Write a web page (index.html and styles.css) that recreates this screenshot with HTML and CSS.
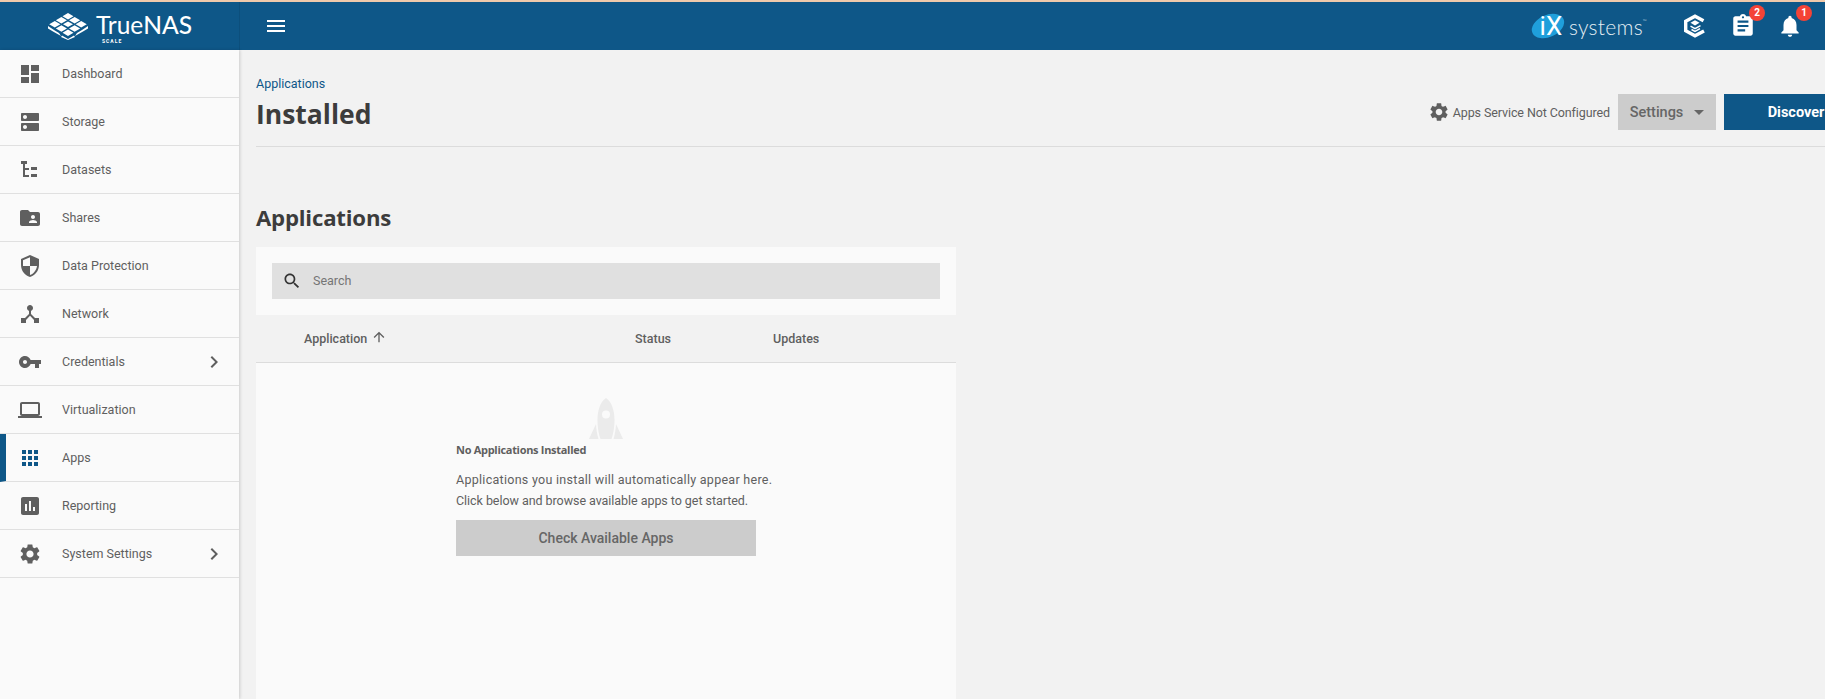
FILE: index.html
```html
<!DOCTYPE html>
<html lang="en">
<head>
<meta charset="utf-8">
<title>TrueNAS - Applications</title>
<link rel="stylesheet" href="styles.css">
</head>
<body>
<div class="app">
  <header class="topbar">
    <div class="brand">
      <svg class="brand-mark" viewBox="0 0 40 27" fill="#fff">
        <polygon points="20,0 25.500,3.300 20,6.600 14.500,3.300"/>
        <polygon points="13.400,4 19,7.300 13.400,10.600 7.800,7.300"/><polygon points="26.600,4 32.200,7.300 26.600,10.600 21,7.300"/>
        <polygon points="6.800,8 12.400,11.300 6.800,14.600 1.200,11.300"/><polygon points="33.200,8 38.800,11.300 33.200,14.600 27.600,11.300"/>
        <polygon points="20,8.500 25,11.300 20,14 15,11.300"/>
        <polygon points="13.400,12.300 19,15.500 13.400,18.800 7.800,15.500"/><polygon points="26.600,12.300 32.200,15.500 26.600,18.800 21,15.500"/>
        <polygon points="20,16.500 25.500,19.700 20,23 14.500,19.700"/>
        <polygon points="0,13 6,17 11,20 13,23 5,18.500 0,15.500"/><polygon points="40,13 34,17 29,20 27,23 35,18.500 40,15.500"/>
        <polygon points="14,22.500 20,26 26,22.500 27,24 20,27 13,24"/>
      </svg>
      <div class="brand-text">
        <span class="brand-name"><span class="brand-true">True</span><b>NAS</b></span>
        <span class="brand-scale">SCALE</span>
      </div>
    </div>
    <button class="menu-btn" aria-label="Toggle menu">
      <svg class="icon24" viewBox="0 0 24 24"><path d="M3 18h18v-2H3v2zm0-5h18v-2H3v2zm0-7v2h18V6H3z"/></svg>
    </button>
    <div class="top-actions">
      <div class="ix">
        <span class="ix-badge"><span class="ix-oval"></span><span class="ix-letters">iX</span></span>
        <span class="ix-word">systems<sup>™</sup></span>
      </div>
      <svg class="tc-icon" viewBox="0 0 24 24" fill="none" stroke="#fff" stroke-width="3.400" stroke-linejoin="miter">
        <path d="M20.500 6.800 12 2.200 2.700 7.200V16.800L12 21.800 21 17"/>
        <path d="M7.500 12.200 12 14.700 17.500 11.700M8.500 15.500 12 17.400 17 14.700" stroke-width="1.500"/>
        <polygon points="12,6.300 16.500,8.800 12,11.500 7.500,8.800" fill="#fff" stroke="none"/>
      </svg>
      <div class="icon-badge">
        <svg class="icon26" viewBox="0 0 24 24" fill="#fff"><path d="M19 3h-4.180C14.400 1.840 13.300 1 12 1c-1.300 0-2.400.84-2.820 2H5c-1.100 0-2 .9-2 2v14c0 1.100.9 2 2 2h14c1.100 0 2-.9 2-2V5c0-1.100-.9-2-2-2zm-7 0c.55 0 1 .45 1 1s-.45 1-1 1-1-.45-1-1 .45-1 1-1zm2 14H7v-2h7v2zm3-4H7v-2h10v2zm0-4H7V7h10v2z"/></svg>
        <span class="badge">2</span>
      </div>
      <div class="icon-badge">
        <svg class="icon26" viewBox="0 0 24 24" fill="#fff"><path d="M12 22c1.100 0 2-.9 2-2h-4c0 1.100.89 2 2 2zm6-6v-5c0-3.070-1.640-5.640-4.500-6.320V4c0-.83-.67-1.500-1.500-1.500s-1.500.67-1.500 1.500v.68C7.630 5.360 6 7.920 6 11v5l-2 2v1h16v-1l-2-2z"/></svg>
        <span class="badge">1</span>
      </div>
    </div>
  </header>

  <div class="shell">
    <nav class="sidenav">
      <a class="nav-row"><svg class="icon24" viewBox="0 0 24 24"><path d="M3 13h8V3H3v10zm0 8h8v-6H3v6zm10 0h8V11h-8v10zm0-18v6h8V3h-8z"/></svg><span>Dashboard</span></a>
      <a class="nav-row"><svg class="icon24" viewBox="0 0 24 24"><path d="M20 13H4c-.55 0-1 .45-1 1v6c0 .55.45 1 1 1h16c.55 0 1-.45 1-1v-6c0-.55-.45-1-1-1zM7 19c-1.100 0-2-.9-2-2s.9-2 2-2 2 .9 2 2-.9 2-2 2zM20 3H4c-.55 0-1 .45-1 1v6c0 .55.45 1 1 1h16c.55 0 1-.45 1-1V4c0-.55-.45-1-1-1zM7 9c-1.100 0-2-.9-2-2s.9-2 2-2 2 .9 2 2-.9 2-2 2z"/></svg><span>Storage</span></a>
      <a class="nav-row"><svg class="icon24" viewBox="0 0 24 24"><path d="M3 3h6v3H3zM5 6h2v4h4v2H7v5h4v2H5zM13 9h6v3h-6zM13 16h6v3h-6z"/></svg><span>Datasets</span></a>
      <a class="nav-row"><svg class="icon24" viewBox="0 0 24 24"><path d="M20 6h-8l-2-2H4c-1.100 0-1.990.9-1.990 2L2 18c0 1.100.9 2 2 2h16c1.100 0 2-.9 2-2V8c0-1.100-.9-2-2-2zm-5 3c1.100 0 2 .9 2 2s-.9 2-2 2-2-.9-2-2 .9-2 2-2zm4 8h-8v-1c0-1.330 2.670-2 4-2s4 .67 4 2v1z"/></svg><span>Shares</span></a>
      <a class="nav-row"><svg class="icon24" viewBox="0 0 24 24"><path d="M12 1L3 5v6c0 5.550 3.840 10.740 9 12 5.160-1.260 9-6.450 9-12V5l-9-4zm0 10.990h7c-.53 4.120-3.280 7.790-7 8.940V12H5V6.300l7-3.110v8.800z"/></svg><span>Data Protection</span></a>
      <a class="nav-row"><svg class="icon24" viewBox="0 0 24 24"><path d="M17 16l-4-4V8.820C14.160 8.400 15 7.300 15 6c0-1.660-1.340-3-3-3S9 4.340 9 6c0 1.300.84 2.400 2 2.820V12l-4 4H3v5h5v-3.050l4-4.200 4 4.200V21h5v-5h-4z"/></svg><span>Network</span></a>
      <a class="nav-row"><svg class="icon24" viewBox="0 0 24 24"><path d="M12.650 10C11.830 7.670 9.610 6 7 6c-3.310 0-6 2.690-6 6s2.690 6 6 6c2.610 0 4.830-1.670 5.650-4H17v4h4v-4h2v-4H12.650zM7 14c-1.100 0-2-.9-2-2s.9-2 2-2 2 .9 2 2-.9 2-2 2z"/></svg><span>Credentials</span><svg class="icon24 chev" viewBox="0 0 24 24"><path d="M10 6L8.590 7.410 13.170 12l-4.580 4.590L10 18l6-6z"/></svg></a>
      <a class="nav-row"><svg class="icon24" viewBox="0 0 24 24"><path d="M20 18c1.100 0 1.990-.9 1.990-2L22 6c0-1.100-.9-2-2-2H4c-1.100 0-2 .9-2 2v10c0 1.100.9 2 2 2H0v2h24v-2h-4zM4 6h16v10H4V6z"/></svg><span>Virtualization</span></a>
      <a class="nav-row active"><svg class="icon24" viewBox="0 0 24 24"><path d="M4 8h4V4H4v4zm6 12h4v-4h-4v4zm-6 0h4v-4H4v4zm0-6h4v-4H4v4zm6 0h4v-4h-4v4zm6-10v4h4V4h-4zm-6 4h4V4h-4v4zm6 6h4v-4h-4v4zm0 6h4v-4h-4v4z"/></svg><span>Apps</span></a>
      <a class="nav-row"><svg class="icon24" viewBox="0 0 24 24"><path d="M19 3H5c-1.100 0-2 .9-2 2v14c0 1.100.9 2 2 2h14c1.100 0 2-.9 2-2V5c0-1.100-.9-2-2-2zM9 17H7v-7h2v7zm4 0h-2V7h2v10zm4 0h-2v-4h2v4z"/></svg><span>Reporting</span></a>
      <a class="nav-row"><svg class="icon24" viewBox="0 0 24 24"><path d="M19.140 12.940c.04-.3.06-.61.06-.94 0-.32-.02-.64-.07-.94l2.030-1.580c.18-.14.23-.41.12-.61l-1.920-3.320c-.12-.22-.37-.29-.59-.22l-2.390.96c-.5-.38-1.030-.7-1.620-.94l-.36-2.540c-.04-.24-.24-.41-.48-.41h-3.840c-.24 0-.43.17-.47.41l-.36 2.540c-.59.24-1.130.57-1.620.94l-2.390-.96c-.22-.08-.47 0-.59.22L2.740 8.870c-.12.21-.08.47.12.61l2.030 1.580c-.05.3-.09.63-.09.94s.02.64.07.94l-2.030 1.580c-.18.14-.23.41-.12.61l1.920 3.320c.12.22.37.29.59.22l2.390-.96c.5.38 1.030.7 1.620.94l.36 2.540c.05.24.24.41.48.41h3.840c.24 0 .44-.17.47-.41l.36-2.540c.59-.24 1.130-.56 1.620-.94l2.390.96c.22.08.47 0 .59-.22l1.920-3.320c.12-.22.07-.47-.12-.61l-2.010-1.580zM12 15.600c-1.980 0-3.600-1.620-3.600-3.600s1.620-3.600 3.600-3.600 3.600 1.620 3.600 3.600-1.620 3.600-3.600 3.600z"/></svg><span>System Settings</span><svg class="icon24 chev" viewBox="0 0 24 24"><path d="M10 6L8.590 7.410 13.170 12l-4.580 4.590L10 18l6-6z"/></svg></a>
    </nav>

    <main class="content">
      <div class="page-head">
        <div class="titles">
          <a class="crumb">Applications</a>
          <h1>Installed</h1>
        </div>
        <div class="head-actions">
          <div class="service">
            <svg class="icon22" viewBox="0 0 24 24"><path d="M19.140 12.940c.04-.3.06-.61.06-.94 0-.32-.02-.64-.07-.94l2.030-1.580c.18-.14.23-.41.12-.61l-1.920-3.320c-.12-.22-.37-.29-.59-.22l-2.390.96c-.5-.38-1.030-.7-1.620-.94l-.36-2.540c-.04-.24-.24-.41-.48-.41h-3.840c-.24 0-.43.17-.47.41l-.36 2.540c-.59.24-1.130.57-1.620.94l-2.390-.96c-.22-.08-.47 0-.59.22L2.740 8.870c-.12.21-.08.47.12.61l2.030 1.580c-.05.3-.09.63-.09.94s.02.64.07.94l-2.030 1.580c-.18.14-.23.41-.12.61l1.920 3.320c.12.22.37.29.59.22l2.390-.96c.5.38 1.030.7 1.620.94l.36 2.540c.05.24.24.41.48.41h3.840c.24 0 .44-.17.47-.41l.36-2.540c.59-.24 1.130-.56 1.620-.94l2.390.96c.22.08.47 0 .59-.22l1.920-3.320c.12-.22.07-.47-.12-.61l-2.010-1.580zM12 15.600c-1.980 0-3.600-1.620-3.600-3.600s1.620-3.600 3.600-3.600 3.600 1.620 3.600 3.600-1.620 3.600-3.600 3.600z"/></svg>
            <span>Apps Service Not Configured</span>
          </div>
          <button class="btn btn-grey">Settings<span class="caret"></span></button>
          <button class="btn btn-blue">Discover</button>
        </div>
      </div>

      <h2>Applications</h2>

      <section class="card">
        <div class="search-wrap">
          <div class="search">
            <svg class="icon20 dark" viewBox="0 0 24 24"><path d="M15.500 14h-.79l-.28-.27C15.410 12.590 16 11.110 16 9.500 16 5.910 13.090 3 9.500 3S3 5.910 3 9.500 5.910 16 9.500 16c1.610 0 3.090-.59 4.230-1.570l.27.28v.79l5 4.990L20.490 19l-4.990-5zm-6 0C7.010 14 5 11.990 5 9.500S7.010 5 9.500 5 14 7.010 14 9.500 11.990 14 9.500 14z"/></svg>
            <span class="placeholder">Search</span>
          </div>
        </div>
        <div class="table-head">
          <div class="th th-app">Application
            <svg class="sort" viewBox="0 0 24 24"><path d="M4 12l1.410 1.410L11 7.830V20h2V7.830l5.580 5.590L20 12l-8-8-8 8z"/></svg>
          </div>
          <div class="th th-status">Status</div>
          <div class="th">Updates</div>
        </div>
        <div class="empty">
          <div class="empty-inner">
            <svg class="rocket" viewBox="0 0 34 42">
              <path fill-rule="evenodd" d="M17 0C23 4 25.500 13 25.500 22C25.500 30 24 37 22.500 41H11.500C10 37 8.500 30 8.500 22C8.500 13 11 4 17 0ZM17 12.500A4 4 0 1 0 17 20.500A4 4 0 1 0 17 12.500Z"/>
              <path d="M7 26 0 41H9.500C8 36 7.200 31 7 26ZM27 26 34 41H24.500C26 36 26.800 31 27 26Z"/>
            </svg>
            <h3>No Applications Installed</h3>
            <p>Applications you install will automatically appear here.</p>
            <p class="tight">Click below and browse available apps to get started.</p>
            <button class="btn btn-grey btn-wide">Check Available Apps</button>
          </div>
        </div>
      </section>
    </main>
  </div>
</div>
</body>
</html>
```

FILE: styles.css
```css
* { box-sizing: border-box; }
html, body { margin: 0; height: 100%; overflow: hidden; }
body { font-family: "Roboto", "Open Sans", sans-serif; color: #5f5f5f; background: #f2f2f2; }
.app { height: 100vh; display: flex; flex-direction: column; border-top: 2px solid #efc9ab; }
.icon24 { width: 24px; height: 24px; flex: none; fill: #5f5f5f; display: block; }
.icon26 { width: 26px; height: 26px; display: block; }
.icon22 { width: 22px; height: 22px; flex: none; fill: #5f5f5f; display: block; }
.icon20 { width: 20px; height: 20px; flex: none; fill: #5f5f5f; display: block; }
.icon20.dark { fill: #333; }

.topbar { height: 48px; flex: none; background: #0e5788; display: flex; align-items: center; color: #fff; }
.brand { width: 240px; height: 100%; flex: none; display: flex; align-items: center; padding-left: 48px; gap: 8px; border-right: 1px solid #0c4f7c; }
.brand-mark { width: 40px; height: 27px; flex: none; }
.brand-text { display: flex; flex-direction: column; align-items: flex-start; height: 40px; position: relative; }
.brand-name { font-family: "Lato", sans-serif; font-size: 24.500px; line-height: 37px; }
.brand-true { font-weight: 400; }
.brand-name b { font-weight: 500; }
.brand-scale { position: absolute; left: 6px; top: 32px; font-size: 5px; line-height: 6px; font-weight: 700; letter-spacing: 1px; }
.menu-btn { margin-left: 24px; padding: 0; border: 0; background: none; }
.menu-btn .icon24 { fill: #fff; }
.top-actions { margin-left: auto; display: flex; align-items: center; padding-right: 22px; }
.ix { display: flex; align-items: center; margin-right: 36px; }
.ix-badge { position: relative; width: 32px; height: 24px; display: flex; align-items: center; justify-content: center; }
.ix-oval { position: absolute; inset: 1px -1px 1px -1px; border-radius: 50%; background: #1f9fdb; transform: rotate(-24deg); }
.ix-letters { position: relative; font-size: 26px; font-weight: 400; line-height: 1; color: #fff; margin-left: 6px; }
.ix-word { font-family: "Lato", sans-serif; font-weight: 300; font-size: 21px; margin-left: 5px; color: #e3edf3; letter-spacing: 0.3px; }
.ix-word sup { font-size: 5px; vertical-align: 12px; line-height: 0; }
.tc-icon { width: 24px; height: 24px; margin-right: 23px; }
.icon-badge { position: relative; width: 26px; height: 26px; }
.icon-badge + .icon-badge { margin-left: 21px; }
.badge { position: absolute; top: -8px; right: -9px; width: 16px; height: 16px; border-radius: 50%; background: #f44336; color: #fff; font-size: 10px; font-weight: 700; line-height: 16px; text-align: center; }

.shell { flex: 1; min-height: 0; display: flex; }
.sidenav { width: 239px; flex: none; background: #fafafa; box-shadow: 1px 0 3px rgba(0,0,0,.16); position: relative; }
.nav-row { height: 48px; display: flex; align-items: center; padding: 0 13px 0 18px; gap: 20px; border-bottom: 1px solid #e0e0e0; font-size: 12.500px; color: #5f5f5f; }
.nav-row span { flex: 1; }
.nav-row.active { border-left: 6px solid #0e5788; padding-left: 12px; }
.nav-row.active .icon24 { fill: #0e5788; }
.chev { margin-left: auto; }

.content { flex: 1; min-width: 0; padding: 0 0 0 17px; display: flex; flex-direction: column; }
.page-head { height: 97px; flex: none; display: flex; justify-content: space-between; border-bottom: 1px solid #dcdcdc; }
.titles { padding-top: 26px; }
.crumb { display: block; font-size: 12.500px; line-height: 15px; color: #0e5788; }
h1, h2 { font-family: "Open Sans", sans-serif; font-weight: 700; color: #3c3c3c; margin: 0; }
h1 { font-size: 26.500px; line-height: 34px; margin-top: 6px; }
h2 { font-size: 22.200px; line-height: 30px; margin-top: 56px; letter-spacing: -0.2px; flex: none; }
.head-actions { display: flex; align-items: flex-start; padding-top: 44px; margin-right: -43px; }
.service { display: flex; align-items: center; gap: 3px; height: 36px; font-size: 12.500px; color: #5f5f5f; margin-right: 8px; letter-spacing: -0.1px; }
.btn { border: 0; height: 36px; font-family: "Roboto", sans-serif; font-size: 14px; font-weight: 500; display: flex; align-items: center; justify-content: center; padding: 0; }
.btn-grey { background: #ccc; color: #666; }
.head-actions .btn-grey { width: 98px; font-size: 14.500px; gap: 11px; margin-right: 8px; }
.caret { width: 0; height: 0; border-left: 5px solid transparent; border-right: 5px solid transparent; border-top: 5px solid #666; }
.btn-blue { background: #0e5788; color: #fff; width: 144px; font-weight: 700; font-size: 14.500px; }

.card { width: 700px; flex: 1; margin-top: 14px; min-height: 0; display: flex; flex-direction: column; }
.search-wrap { background: #fafafa; padding: 16px; flex: none; }
.search { height: 36px; background: #e0e0e0; display: flex; align-items: center; padding: 0 0 1px 10px; gap: 11px; }
.placeholder { font-size: 12.500px; color: #757575; }
.table-head { height: 48px; flex: none; display: flex; align-items: center; padding-left: 48px; border-bottom: 1px solid #dcdcdc; }
.th { font-size: 12.500px; font-weight: 500; color: #5f5f5f; display: flex; align-items: center; gap: 4px; }
.th-app { width: 331px; }
.th-status { width: 138px; }
.sort { width: 16px; height: 16px; fill: #5f5f5f; margin-top: -3px; }
.empty { flex: 1; background: #fafafa; padding: 35px 0 0 200px; }
.empty-inner { width: 300px; }
.rocket { display: block; width: 34px; height: 42px; margin: 0 auto; fill: #ebebeb; }
h3 { font-family: "Open Sans", sans-serif; font-size: 11px; font-weight: 700; color: #5f5f5f; line-height: 16px; margin: 2px 0 11px; letter-spacing: -0.3px; }
p { margin: 0; font-size: 12.500px; line-height: 21px; color: #5f5f5f; letter-spacing: 0.28px; white-space: nowrap; }
p.tight { letter-spacing: -0.05px; }
.btn-wide { width: 300px; margin-top: 9px; font-size: 14px; }
```
